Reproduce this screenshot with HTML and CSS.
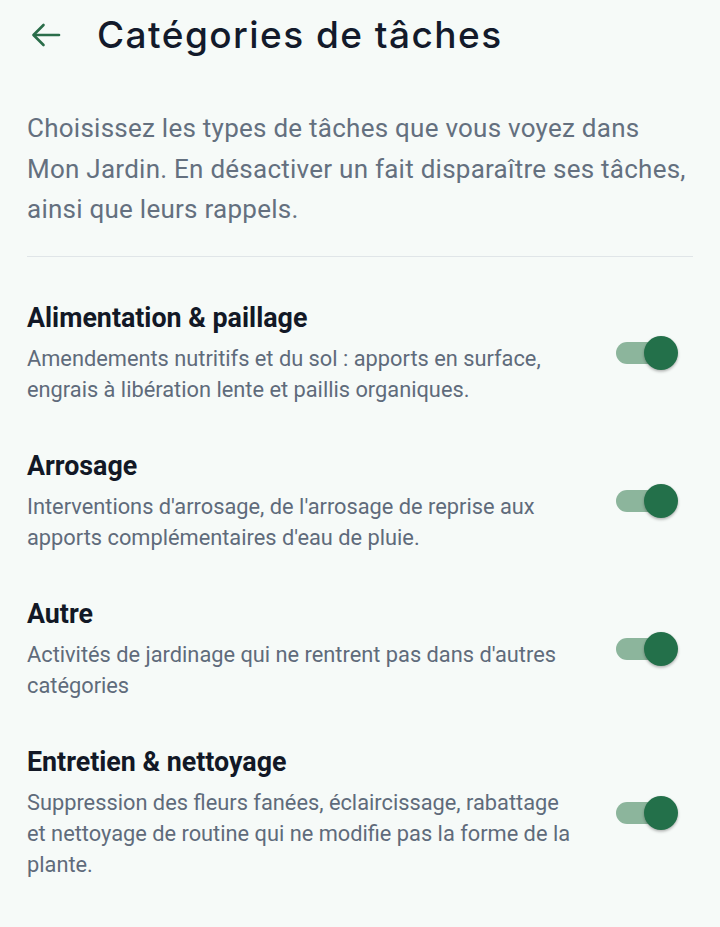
FILE: index.html
```html
<!DOCTYPE html>
<html lang="fr">
<head>
<meta charset="utf-8">
<title>Catégories de tâches</title>
<link rel="stylesheet" href="styles.css">
</head>
<body>
<div class="page">
  <header class="topbar">
    <span class="back" aria-label="Retour">
      <svg width="30" height="24" viewBox="0 0 30 24" fill="none" stroke="#2a6d4a" stroke-width="2.6" stroke-linecap="round" stroke-linejoin="round">
        <path d="M28 12H3"/>
        <path d="M12.5 2L2.5 12l10 10"/>
      </svg>
    </span>
    <h1 class="title">Catégories de tâches</h1>
  </header>

  <p class="intro">Choisissez les types de tâches que vous voyez dans Mon Jardin. En désactiver un fait disparaître ses tâches, ainsi que leurs rappels.</p>

  <hr class="divider">

  <ul class="list">
    <li class="item">
      <div class="text">
        <div class="name">Alimentation &amp; paillage</div>
        <div class="desc">Amendements nutritifs et du sol : apports en surface, engrais à libération lente et paillis organiques.</div>
      </div>
      <span class="switch"><span class="track"></span><span class="thumb"></span></span>
    </li>
    <li class="item">
      <div class="text">
        <div class="name">Arrosage</div>
        <div class="desc">Interventions d'arrosage, de l'arrosage de reprise aux apports complémentaires d'eau de pluie.</div>
      </div>
      <span class="switch"><span class="track"></span><span class="thumb"></span></span>
    </li>
    <li class="item">
      <div class="text">
        <div class="name">Autre</div>
        <div class="desc">Activités de jardinage qui ne rentrent pas dans d'autres catégories</div>
      </div>
      <span class="switch"><span class="track"></span><span class="thumb"></span></span>
    </li>
    <li class="item">
      <div class="text">
        <div class="name">Entretien &amp; nettoyage</div>
        <div class="desc">Suppression des fleurs fanées, éclaircissage, rabattage et nettoyage de routine qui ne modifie pas la forme de la plante.</div>
      </div>
      <span class="switch"><span class="track"></span><span class="thumb"></span></span>
    </li>
  </ul>
</div>
</body>
</html>
```

FILE: styles.css
```css
html, body {
  margin: 0;
  padding: 0;
  background: #f6faf8;
}

body {
  font-family: Roboto, "Liberation Sans", sans-serif;
  width: 720px;
  min-height: 927px;
}

.page {
  padding: 0 27px;
}

.topbar {
  height: 70px;
  display: flex;
  align-items: center;
}

.back {
  display: flex;
  width: 30px;
  height: 24px;
  margin-left: 4px;
  margin-right: 36px;
}

.title {
  margin: 0;
  font-family: Inter, "Noto Sans", sans-serif;
  font-weight: 500;
  font-size: 37px;
  line-height: 44px;
  color: #131a2b;
  letter-spacing: 1.45px;
}

.intro {
  margin: 38px -2px 0 0;
  font-size: 26px;
  line-height: 40.5px;
  letter-spacing: 0.25px;
  color: #64707f;
}

.divider {
  margin: 26px 0 0;
  border: 0;
  height: 1px;
  background: #e0e5e8;
}

.list {
  list-style: none;
  margin: 23px 0 0;
  padding: 0;
}

.item {
  display: flex;
  align-items: center;
  gap: 44px;
  padding: 22px 0 23px;
}

.text {
  flex: 1;
  min-width: 0;
}

.name {
  font-size: 26.8px;
  font-weight: 700;
  line-height: 32px;
  color: #121826;
  margin-bottom: 9px;
}

.desc {
  font-size: 21.8px;
  line-height: 31px;
  color: #5f6b7b;
}

.switch {
  position: relative;
  flex: none;
  width: 62px;
  height: 34px;
  margin-right: 15px;
}

.track {
  position: absolute;
  left: 0;
  top: 6px;
  width: 50px;
  height: 22px;
  border-radius: 11px;
  background: #8cb59c;
}

.thumb {
  position: absolute;
  right: 0;
  top: 0;
  width: 34px;
  height: 34px;
  border-radius: 50%;
  background: #23704a;
  box-shadow: 0 1.5px 3px rgba(0, 0, 0, 0.3);
}
```
